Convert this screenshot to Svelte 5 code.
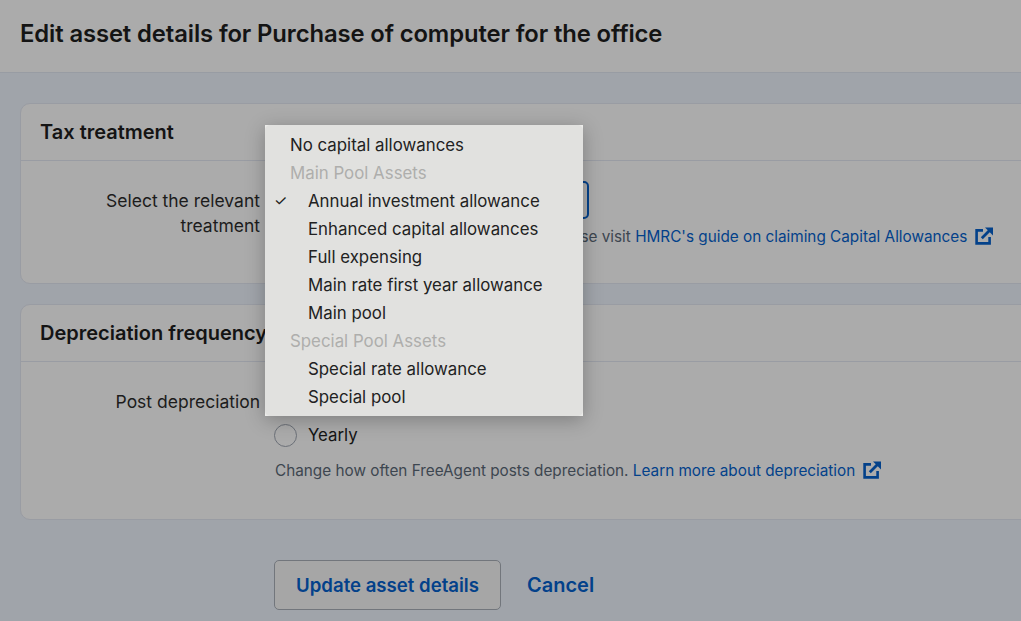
<script>
	const menu = [
		{ label: 'No capital allowances', kind: 'plain' },
		{ label: 'Main Pool Assets', kind: 'group' },
		{ label: 'Annual investment allowance', kind: 'item', checked: true },
		{ label: 'Enhanced capital allowances', kind: 'item' },
		{ label: 'Full expensing', kind: 'item' },
		{ label: 'Main rate first year allowance', kind: 'item' },
		{ label: 'Main pool', kind: 'item' },
		{ label: 'Special Pool Assets', kind: 'group' },
		{ label: 'Special rate allowance', kind: 'item' },
		{ label: 'Special pool', kind: 'item' }
	];
</script>

{#snippet external()}
	<svg class="ext" viewBox="0 0 18 18" width="18" height="18" aria-hidden="true">
		<path d="M8 3.4H1.6v13h13V10" fill="none" stroke="currentColor" stroke-width="2.6" />
		<path d="M6.8 11.2 15.5 2.5" fill="none" stroke="currentColor" stroke-width="2.8" />
		<path d="M10 0.4h8v8z" fill="currentColor" />
	</svg>
{/snippet}

<div class="page">
	<header class="masthead">
		<h1>Edit asset details for Purchase of computer for the office</h1>
	</header>

	<main class="content">
		<section class="card first">
			<h2>Tax treatment</h2>
			<div class="row">
				<div class="label">Select the relevant<br />treatment</div>
				<div class="field">
					<div class="select"></div>
					<p class="help">
						For more information on tax handling, please visit
						<a href="#hmrc">HMRC's guide on claiming Capital Allowances {@render external()}</a>
					</p>
				</div>
			</div>
		</section>

		<section class="card second">
			<h2>Depreciation frequency</h2>
			<div class="row">
				<div class="label">Post depreciation</div>
				<div class="field">
					<div class="radio"><span class="dot"></span>Monthly</div>
					<div class="radio"><span class="dot"></span>Yearly</div>
					<p class="help">
						Change how often FreeAgent posts depreciation.
						<a href="#dep">Learn more about depreciation {@render external()}</a>
					</p>
				</div>
			</div>
		</section>

		<div class="actions">
			<button type="button">Update asset details</button>
			<a href="#cancel" class="cancel">Cancel</a>
		</div>
	</main>

	<div class="popup">
		<ul class="menu">
			{#each menu as entry}
				<li class={entry.kind}>
					{#if entry.checked}<span class="tick">✓</span>{/if}
					{entry.label}
				</li>
			{/each}
		</ul>
	</div>
</div>

<style>
	:global(body) {
		margin: 0;
		background: #a0a4aa;
	}

	.page {
		position: relative;
		width: 1021px;
		height: 621px;
		overflow: hidden;
		font-family: Inter, 'Noto Sans', sans-serif;
		color: #141414;
		background: #a0a4aa;
	}

	.masthead {
		height: 73px;
		box-sizing: border-box;
		padding: 19px 20px 0;
		background: #ababab;
		border-bottom: 1px solid #989ca3;
	}

	h1 {
		margin: 0;
		font-size: 23.8px;
		line-height: 30px;
		font-weight: 600;
		letter-spacing: -0.1px;
	}

	.content {
		padding: 30px 0 0 20px;
		width: 1100px;
	}

	.card {
		box-sizing: border-box;
		background: #ababab;
		border: 1px solid #999ca3;
		border-radius: 10px;
	}

	.first {
		height: 181px;
		margin-bottom: 20px;
	}

	.second {
		height: 216px;
	}

	h2 {
		margin: 0;
		height: 57px;
		box-sizing: border-box;
		padding: 14px 19px 0;
		font-size: 20px;
		line-height: 28px;
		font-weight: 600;
		border-bottom: 1px solid #999ca3;
	}

	.row {
		display: flex;
		padding-top: 27px;
		line-height: 25px;
	}

	.label {
		width: 239px;
		text-align: right;
		color: #1c1c1c;
		font-size: 17.5px;
	}

	.field {
		margin-left: 14px;
	}

	.select {
		box-sizing: border-box;
		width: 315px;
		height: 38px;
		margin-top: -7px;
		border: 2px solid #03418a;
		border-radius: 5px;
	}

	.help {
		margin: 8px 0 0 1px;
		font-size: 15.3px;
		line-height: 24px;
		color: #3d4650;
		white-space: nowrap;
	}

	.first .help {
		margin-top: 6px;
	}

	a {
		color: #03418a;
		text-decoration: none;
	}

	.ext {
		vertical-align: -3px;
		margin-left: 3px;
	}

	.radio {
		display: flex;
		align-items: center;
		gap: 11px;
		height: 30px;
		margin-bottom: 2px;
		font-size: 16.8px;
		position: relative;
		top: -1px;
	}

	.dot {
		box-sizing: border-box;
		width: 23px;
		height: 23px;
		border: 1px solid #6b7078;
		border-radius: 50%;
	}

	.actions {
		display: flex;
		align-items: center;
		gap: 26px;
		margin-top: 40px;
		margin-left: 254px;
	}

	button {
		box-sizing: border-box;
		width: 227px;
		height: 50px;
		padding: 0;
		font: 600 18.6px Inter, sans-serif;
		color: #03418a;
		background: #a6a6a6;
		border: 1px solid #72767c;
		border-radius: 5px;
	}

	.cancel {
		font-size: 20px;
		font-weight: 600;
	}

	.popup {
		position: absolute;
		left: 265px;
		top: 125px;
		width: 318px;
		height: 291px;
		background: #ececea;
		box-shadow: 0 4px 18px rgba(0, 0, 0, 0.26);
	}

	.menu {
		box-sizing: border-box;
		height: 100%;
		margin: 0;
		padding: 6px 0;
		list-style: none;
		background: #e1e1df;
		border-radius: 5px;
		font-size: 16.85px;
		line-height: 28px;
		color: #222;
	}

	.menu li {
		position: relative;
		height: 28px;
		padding-left: 25px;
		white-space: nowrap;
	}

	.menu .item {
		padding-left: 43px;
	}

	.menu .group {
		color: #aeaeac;
	}

	.tick {
		position: absolute;
		left: 9px;
		font-size: 15px;
	}
</style>
